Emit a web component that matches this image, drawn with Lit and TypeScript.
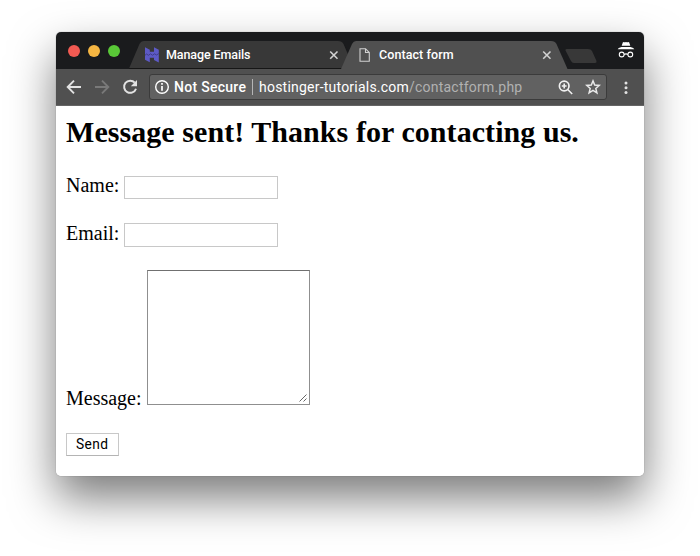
import { LitElement, html, css } from "lit";
import { customElement } from "lit/decorators.js";

@customElement("browser-tabs")
class BrowserTabs extends LitElement {
  static styles = css`
    :host {
      display: flex;
      position: relative;
      height: 37px;
      background: #1a1b1d;
      color: #fff;
      font: 500 12.5px/16px Roboto, "Liberation Sans", sans-serif;
    }
    .shapes { position: absolute; left: 0; top: 0; }
    .lights { display: flex; gap: 8px; padding: 13px 0 0 12px; width: 73px; box-sizing: content-box; }
    .light { width: 12px; height: 12px; border-radius: 50%; flex: none; }
    .red { background: #f25a52; }
    .amber { background: #f6b642; }
    .green { background: #59c837; }
    .tab { position: relative; display: flex; box-sizing: border-box; padding-top: 15px; height: 37px; }
    .first { width: 214px; padding-left: 3px; }
    .second { width: 214px; padding-left: 4px; }
    .title { flex: 1; white-space: nowrap; }
    .first .title { padding-left: 6px; letter-spacing: -0.1px; }
    .second .title { padding-left: 8px; letter-spacing: 0.08px; }
    svg { display: block; flex: none; }
    .close { margin: 3px 16px 0 0; }
    .second .close { margin-right: 17px; }
    .fav { margin-top: -1px; }
    .doc { margin-top: 1px; }
    .incognito { position: relative; margin: 9px 0 0 48px; }
  `;
  private close() {
    return html`<svg class="close" width="10" height="10" viewBox="0 0 10 10">
      <path d="M1.200 1.500 8.500 8.800M8.500 1.500 1.200 8.800" stroke="#d0d0d0" stroke-width="1.600" />
    </svg>`;
  }
  render() {
    return html`
      <svg class="shapes" width="588" height="37" viewBox="0 0 588 37">
        <path d="M73 36.5 83.5 12Q85 9 88 9H282Q286 9 287.500 12L298 36.500Z" fill="#383838" />
        <path d="M73 36.5H286" stroke="#161616" />
        <path d="M288 12 293 21 297 12Z" fill="#1a1b1d" />
        <path d="M285 37 296 12Q297.500 9 300 9H495Q499 9 500.500 12L511.500 37Z" fill="#505050" />
        <path d="M510.500 17H532Q535 17 536 19L540.500 29Q541 31 539 31H518Q516 31 515 29L509.500 18.500Q509 17 510.500 17Z" fill="#383838" />
      </svg>
      <div class="lights">
        <span class="light red"></span><span class="light amber"></span><span class="light green"></span>
      </div>
      <div class="tab first">
        <svg class="fav" width="16" height="17" viewBox="0 0 16 17">
          <path d="M1 1.200 5.800 3.800V5.700H10V1.200L14.800 3.800V16.500L10 14V11.700H5.800V16.200L1 13.800Z" fill="#5d5ac6" />
          <path d="M1 9.300 2.500 8 4.500 9.300 6.500 7.800 8.500 9.300 10.500 7.800 12.500 9 14.800 7.500" fill="none" stroke="#403d88" stroke-width="1" />
        </svg>
        <span class="title">Manage Emails</span>${this.close()}
      </div>
      <div class="tab second">
        <svg class="doc" width="12" height="15" viewBox="0 0 12 15">
          <path d="M1 .7H6.500L10.300 4.500V13.300H1ZM6.500.7V4.500H10.300" fill="none" stroke="#d0d0d0" stroke-width="1.100" />
        </svg>
        <span class="title">Contact form</span>${this.close()}
      </div>
      <svg class="incognito" width="18" height="19" viewBox="0 0 18 19">
        <path d="M6 1Q7.500 1.600 9 1.100Q10.500 1.600 12 1L13.300 4.800H4.700ZM.7 8.200Q1 6.800 4.500 5.900H13.500Q17 6.800 17.300 8.200Z" fill="#fff" />
        <g fill="none" stroke="#fff" stroke-width="1.100"><circle cx="4.700" cy="13.500" r="2.400" /><circle cx="13.300" cy="13.500" r="2.400" /><path d="M7.100 13.400Q9 12.300 10.900 13.400" /></g>
      </svg>
    `;
  }
}

@customElement("browser-toolbar")
class BrowserToolbar extends LitElement {
  static styles = css`
    :host {
      display: flex;
      box-sizing: border-box;
      height: 37px;
      background: #505050;
      border-bottom: 1px solid #656565;
      padding: 5px 0 0 10px;
      color: #fff;
      font: 14px/18px Roboto, "Liberation Sans", sans-serif;
    }
    svg { display: block; flex: none; }
    .nav { margin-top: 5px; }
    .back { margin-right: 12px; }
    .forward { margin-right: 12px; }
    .reload { margin-right: 11px; }
    .address {
      display: flex;
      box-sizing: border-box;
      width: 458px;
      height: 26px;
      border: 1px solid #3b3b3b;
      border-radius: 3px;
      background: #616161;
      padding: 3px 0 0 4px;
      white-space: nowrap;
    }
    .info { margin: 1px 4px 0 0; }
    .secure { font-weight: 500; width: 78px; letter-spacing: 0.28px; }
    .rule { width: 1px; height: 16px; margin: 1px 6px 0 0; background: #b5b5b5; }
    .url { flex: 1; letter-spacing: 0.22px; }
    .path { color: #b1b1b1; }
    .zoom { margin: 2px 12px 0 0; }
    .star { margin: 1px 5px 0 0; }
    .menu { margin: 7px 0 0 17px; }
  `;
  render() {
    return html`
      <svg class="nav back" width="16" height="16" viewBox="0 0 16 16">
        <path d="M15 8H2M8 1.700 1.700 8 8 14.300" fill="none" stroke="#e2e2e2" stroke-width="1.900" />
      </svg>
      <svg class="nav forward" width="16" height="16" viewBox="0 0 16 16">
        <path d="M1 8H14M8 1.700 14.300 8 8 14.300" fill="none" stroke="#797979" stroke-width="1.900" />
      </svg>
      <svg class="nav reload" width="16" height="16" viewBox="0 0 16 16">
        <path d="M12.800 3.700A6.100 6.100 0 1 0 14 9.700" fill="none" stroke="#e2e2e2" stroke-width="2" />
        <path d="M15 1V7.200H8.800Z" fill="#e2e2e2" />
      </svg>
      <div class="address">
        <svg class="info" width="16" height="16" viewBox="0 0 16 16">
          <circle cx="8" cy="8" r="6.300" fill="none" stroke="#fff" stroke-width="1.400" />
          <path d="M8 7V11.700M8 4V5.700" stroke="#fff" stroke-width="1.700" />
        </svg>
        <span class="secure">Not Secure</span><span class="rule"></span>
        <span class="url">hostinger-tutorials.com<span class="path">/contactform.php</span></span>
        <svg class="zoom" width="15" height="15" viewBox="0 0 15 15">
          <circle cx="6.200" cy="6" r="4.800" fill="none" stroke="#f0f0f0" stroke-width="1.700" />
          <path d="M9.700 9.500 14.200 14M6.200 3.600V8.400M3.800 6H8.600" stroke="#f0f0f0" stroke-width="1.600" />
        </svg>
        <svg class="star" width="16" height="16" viewBox="0 0 16 16">
          <path d="M8 1.900 9.700 6 14.200 6.400 10.800 9.400 11.900 13.800 8 11.400 4.100 13.800 5.200 9.400 1.800 6.400 6.300 6Z" fill="none" stroke="#e8e8e8" stroke-width="1.500" />
        </svg>
      </div>
      <svg class="menu" width="4" height="14" viewBox="0 0 4 14">
        <g fill="#e2e2e2"><circle cx="2" cy="1.900" r="1.500" /><circle cx="2" cy="6.700" r="1.500" /><circle cx="2" cy="11.500" r="1.500" /></g>
      </svg>
    `;
  }
}

@customElement("contact-page")
class ContactPage extends LitElement {
  static styles = css`
    :host {
      display: block;
      flex: 1;
      padding: 9px 10px 0;
      background: #fff;
      color: #000;
      font: 20px/24px "Liberation Serif", serif;
    }
    h2 { margin: 0 0 24px; font-size: 30px; line-height: 34px; white-space: nowrap; letter-spacing: 0.06px; }
    .row { display: flex; }
    .field { height: 48px; }
    .label { width: 58px; }
    .input { box-sizing: border-box; width: 154px; height: 23px; margin-top: 3px; border: 1px solid #c8c8c8; }
    .email .input { height: 24px; margin-top: 2px; }
    .message { height: 140px; margin-top: 1px; }
    .message .label { width: 81px; align-self: flex-end; }
    .area {
      display: flex;
      align-items: flex-end;
      justify-content: flex-end;
      box-sizing: border-box;
      width: 163px;
      height: 135px;
      border: 1px solid #8f8f8f;
      border-top-color: #707070;
      padding: 0 2px 2px 0;
    }
    .send {
      box-sizing: border-box;
      width: 53px;
      height: 23px;
      margin-top: 23px;
      padding-left: 9px;
      border: 1px solid #c8c8c8;
      border-bottom-color: #b4b4b4;
      font: 13.75px/21px Roboto, "Liberation Sans", sans-serif;
      letter-spacing: 0.4px;
    }
  `;
  render() {
    return html`
      <h2>Message sent! Thanks for contacting us.</h2>
      <div class="row field"><span class="label">Name:</span><div class="input"></div></div>
      <div class="row field email"><span class="label">Email:</span><div class="input"></div></div>
      <div class="row message">
        <span class="label">Message:</span>
        <div class="area">
          <svg width="8" height="8" viewBox="0 0 8 8"><path d="M.5 7.500 7.500.5M4.500 7.500 7.500 4.500" stroke="#666" stroke-width="1" /></svg>
        </div>
      </div>
      <div class="send">Send</div>
    `;
  }
}

@customElement("app-root")
class AppRoot extends LitElement {
  static styles = css`
    :host { display: block; box-sizing: border-box; width: 700px; height: 556px; padding: 32px 56px 80px; background: #fff; overflow: hidden; }
    .window {
      display: flex;
      flex-direction: column;
      height: 444px;
      border-radius: 5px;
      box-shadow: 0 22px 45px rgba(0, 0, 0, 0.52), 0 0 1px rgba(0, 0, 0, 0.5);
    }
    .frame { display: flex; flex-direction: column; flex: 1; border-radius: 5px; overflow: hidden; }
  `;
  render() {
    return html`<div class="window"><div class="frame">
      <browser-tabs></browser-tabs>
      <browser-toolbar></browser-toolbar>
      <contact-page></contact-page>
    </div></div>`;
  }
}
